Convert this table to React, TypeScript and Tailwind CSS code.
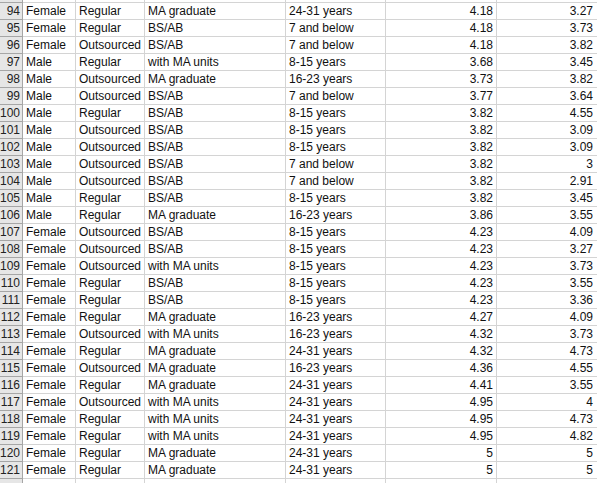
const rows: [string, string, string, string, string, string, string][] = [
  ['', '', '', '', '', '', ''],
  ['94', 'Female', 'Regular', 'MA graduate', '24-31 years', '4.18', '3.27'],
  ['95', 'Female', 'Regular', 'BS/AB', '7 and below', '4.18', '3.73'],
  ['96', 'Female', 'Outsourced', 'BS/AB', '7 and below', '4.18', '3.82'],
  ['97', 'Male', 'Regular', 'with MA units', '8-15 years', '3.68', '3.45'],
  ['98', 'Male', 'Outsourced', 'MA graduate', '16-23 years', '3.73', '3.82'],
  ['99', 'Male', 'Outsourced', 'BS/AB', '7 and below', '3.77', '3.64'],
  ['100', 'Male', 'Regular', 'BS/AB', '8-15 years', '3.82', '4.55'],
  ['101', 'Male', 'Outsourced', 'BS/AB', '8-15 years', '3.82', '3.09'],
  ['102', 'Male', 'Outsourced', 'BS/AB', '8-15 years', '3.82', '3.09'],
  ['103', 'Male', 'Outsourced', 'BS/AB', '7 and below', '3.82', '3'],
  ['104', 'Male', 'Outsourced', 'BS/AB', '7 and below', '3.82', '2.91'],
  ['105', 'Male', 'Regular', 'BS/AB', '8-15 years', '3.82', '3.45'],
  ['106', 'Male', 'Regular', 'MA graduate', '16-23 years', '3.86', '3.55'],
  ['107', 'Female', 'Outsourced', 'BS/AB', '8-15 years', '4.23', '4.09'],
  ['108', 'Female', 'Outsourced', 'BS/AB', '8-15 years', '4.23', '3.27'],
  ['109', 'Female', 'Outsourced', 'with MA units', '8-15 years', '4.23', '3.73'],
  ['110', 'Female', 'Regular', 'BS/AB', '8-15 years', '4.23', '3.55'],
  ['111', 'Female', 'Regular', 'BS/AB', '8-15 years', '4.23', '3.36'],
  ['112', 'Female', 'Regular', 'MA graduate', '16-23 years', '4.27', '4.09'],
  ['113', 'Female', 'Outsourced', 'with MA units', '16-23 years', '4.32', '3.73'],
  ['114', 'Female', 'Regular', 'MA graduate', '24-31 years', '4.32', '4.73'],
  ['115', 'Female', 'Outsourced', 'MA graduate', '16-23 years', '4.36', '4.55'],
  ['116', 'Female', 'Regular', 'MA graduate', '24-31 years', '4.41', '3.55'],
  ['117', 'Female', 'Outsourced', 'with MA units', '24-31 years', '4.95', '4'],
  ['118', 'Female', 'Regular', 'with MA units', '24-31 years', '4.95', '4.73'],
  ['119', 'Female', 'Regular', 'with MA units', '24-31 years', '4.95', '4.82'],
  ['120', 'Female', 'Regular', 'MA graduate', '24-31 years', '5', '5'],
  ['121', 'Female', 'Regular', 'MA graduate', '24-31 years', '5', '5'],
  ['', '', '', '', '', '', ''],
];

const cell = 'h-[17px] border-r border-b border-[#d4d4d4] px-[3px] leading-[16px] whitespace-nowrap overflow-hidden';

export default function App() {
  return (
    <div className="w-[597px] h-[483px] overflow-hidden bg-white text-[12px] text-[#111] font-['Liberation_Sans',Arial,sans-serif]">
      <div className="-mt-[14px] grid grid-cols-[23px_53px_69px_141px_100px_111px_120px]">
        {rows.map(([n, a, b, c, d, e, f], i) => (
          <div key={i} className="contents">
            <div className="h-[17px] border-r border-b border-[#a6a6a6] bg-[#e6e6e6] pr-[2px] text-right leading-[16px] text-[#222]">
              {n}
            </div>
            <div className={cell}>{a}</div>
            <div className={cell}>{b}</div>
            <div className={cell}>{c}</div>
            <div className={cell}>{d}</div>
            <div className={`${cell} text-right`}>{e}</div>
            <div className={`${cell} text-right pr-[23px]`}>{f}</div>
          </div>
        ))}
      </div>
    </div>
  );
}
